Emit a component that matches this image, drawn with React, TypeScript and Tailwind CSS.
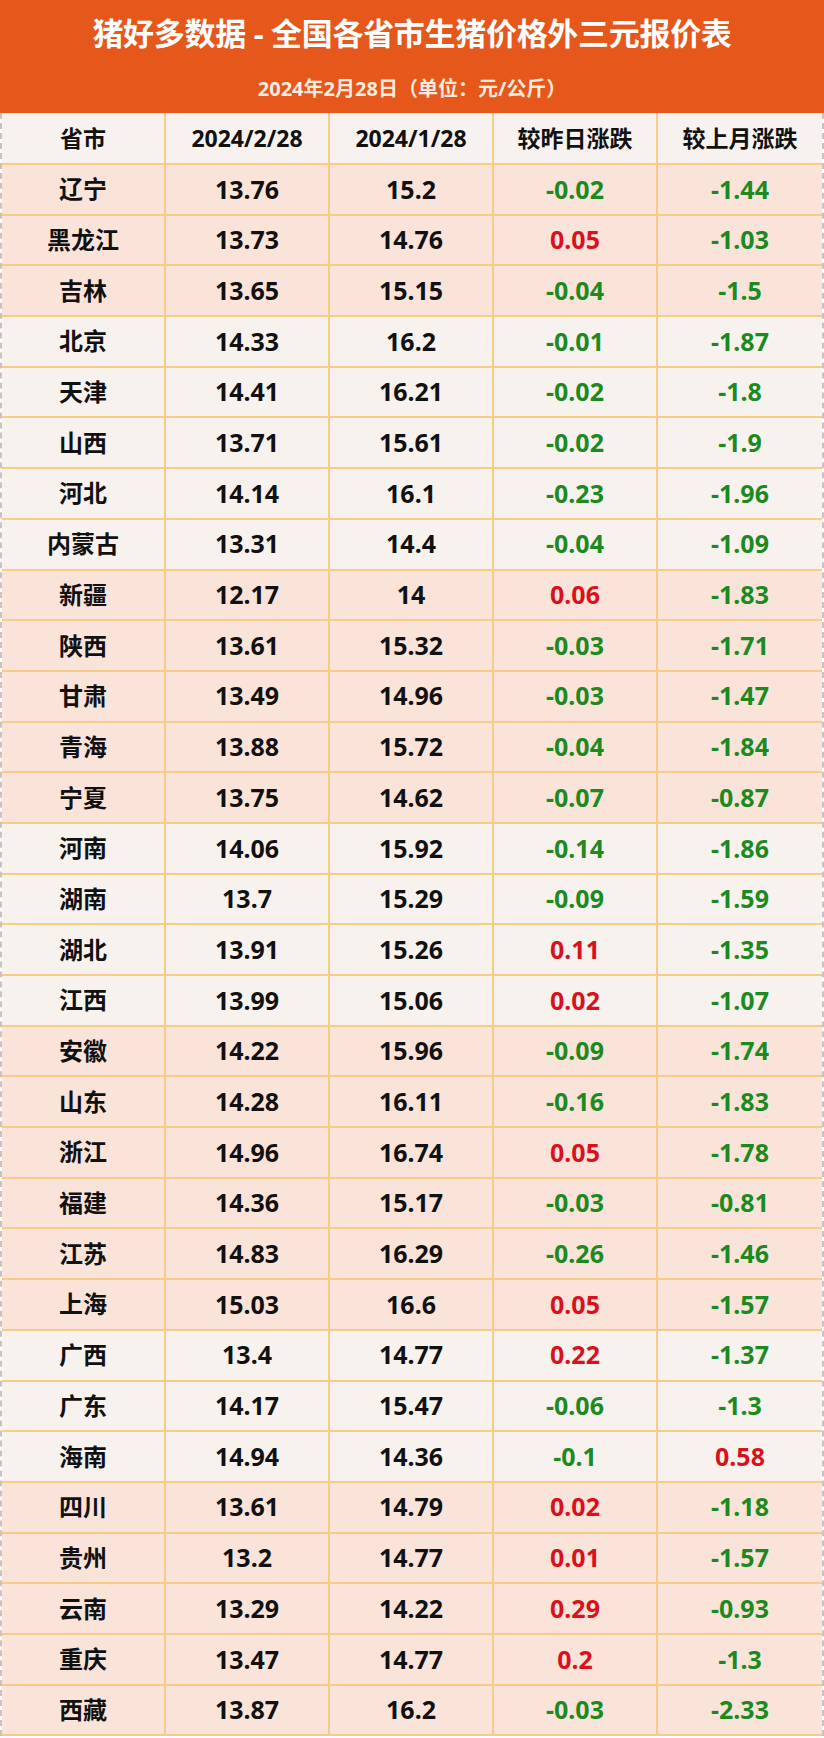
import React from 'react'

type Row = [string, string, string, string, string]

// 区域分组：每组同一底色
const GROUPS: { pink: boolean; rows: Row[] }[] = [
  { pink: true, rows: [
    ['辽宁', '13.76', '15.2', '-0.02', '-1.44'],
    ['黑龙江', '13.73', '14.76', '0.05', '-1.03'],
    ['吉林', '13.65', '15.15', '-0.04', '-1.5'],
  ] },
  { pink: false, rows: [
    ['北京', '14.33', '16.2', '-0.01', '-1.87'],
    ['天津', '14.41', '16.21', '-0.02', '-1.8'],
    ['山西', '13.71', '15.61', '-0.02', '-1.9'],
    ['河北', '14.14', '16.1', '-0.23', '-1.96'],
    ['内蒙古', '13.31', '14.4', '-0.04', '-1.09'],
  ] },
  { pink: true, rows: [
    ['新疆', '12.17', '14', '0.06', '-1.83'],
    ['陕西', '13.61', '15.32', '-0.03', '-1.71'],
    ['甘肃', '13.49', '14.96', '-0.03', '-1.47'],
    ['青海', '13.88', '15.72', '-0.04', '-1.84'],
    ['宁夏', '13.75', '14.62', '-0.07', '-0.87'],
  ] },
  { pink: false, rows: [
    ['河南', '14.06', '15.92', '-0.14', '-1.86'],
    ['湖南', '13.7', '15.29', '-0.09', '-1.59'],
    ['湖北', '13.91', '15.26', '0.11', '-1.35'],
    ['江西', '13.99', '15.06', '0.02', '-1.07'],
  ] },
  { pink: true, rows: [
    ['安徽', '14.22', '15.96', '-0.09', '-1.74'],
    ['山东', '14.28', '16.11', '-0.16', '-1.83'],
    ['浙江', '14.96', '16.74', '0.05', '-1.78'],
    ['福建', '14.36', '15.17', '-0.03', '-0.81'],
    ['江苏', '14.83', '16.29', '-0.26', '-1.46'],
    ['上海', '15.03', '16.6', '0.05', '-1.57'],
  ] },
  { pink: false, rows: [
    ['广西', '13.4', '14.77', '0.22', '-1.37'],
    ['广东', '14.17', '15.47', '-0.06', '-1.3'],
    ['海南', '14.94', '14.36', '-0.1', '0.58'],
  ] },
  { pink: true, rows: [
    ['四川', '13.61', '14.79', '0.02', '-1.18'],
    ['贵州', '13.2', '14.77', '0.01', '-1.57'],
    ['云南', '13.29', '14.22', '0.29', '-0.93'],
    ['重庆', '13.47', '14.77', '0.2', '-1.3'],
    ['西藏', '13.87', '16.2', '-0.03', '-2.33'],
  ] },
]

const FONT = "font-['Noto_Sans','Noto_Sans_CJK_SC',sans-serif]"
const CELL = 'flex items-center justify-center border-r-2 border-[#f5cd88] last:border-r-0'

function change(v: string) {
  return v.startsWith('-') ? 'text-[#1c8a1f]' : 'text-[#d8111c]'
}

export default function App() {
  return (
    <div className={`w-[824px] bg-white ${FONT}`}>
      <div className="flex h-[113px] flex-col items-center bg-[#e5571b] text-white">
        <div className="mt-[13px] text-[31px] font-bold leading-[40px] tracking-[-0.3px]">
          猪好多数据 - 全国各省市生猪价格外三元报价表
        </div>
        <div className="mt-[23px] text-[20px] font-bold leading-[26px] text-[#fcebde]">
          2024年2月28日（单位：元/公斤）
        </div>
      </div>

      <div className="border-x-2 border-dashed border-x-[#c9c3bf]">
        <div className="grid h-[52px] grid-cols-5 border-b-2 border-[#f5cd88] bg-[#f7f2ef] text-[23px] font-bold text-[#111]">
          <div className={CELL}>省市</div>
          <div className={CELL}>2024/2/28</div>
          <div className={CELL}>2024/1/28</div>
          <div className={CELL}>较昨日涨跌</div>
          <div className={CELL}>较上月涨跌</div>
        </div>

        {GROUPS.map((g, gi) =>
          g.rows.map((r) => (
            <div
              key={`${gi}-${r[0]}`}
              className={`grid h-[50.7px] grid-cols-5 border-b-2 border-[#f5cd88] font-bold ${g.pink ? 'bg-[#fae3d9]' : 'bg-[#f8f2ef]'}`}
            >
              <div className={`${CELL} text-[24px] text-[#111]`}>{r[0]}</div>
              <div className={`${CELL} text-[25px] text-[#111]`}>{r[1]}</div>
              <div className={`${CELL} text-[25px] text-[#111]`}>{r[2]}</div>
              <div className={`${CELL} text-[25px] ${change(r[3])}`}>{r[3]}</div>
              <div className={`${CELL} text-[25px] ${change(r[4])}`}>{r[4]}</div>
            </div>
          ))
        )}
      </div>
    </div>
  )
}
